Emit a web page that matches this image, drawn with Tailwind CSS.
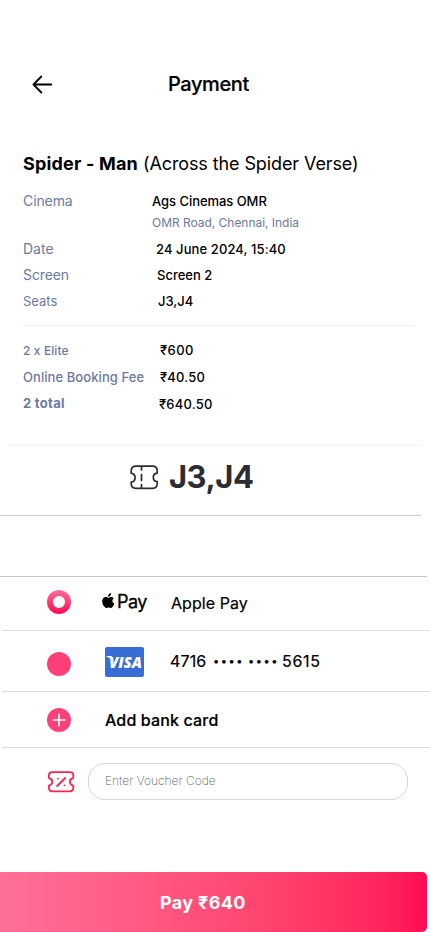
<!DOCTYPE html>
<html lang="en">
<head>
<meta charset="utf-8">
<meta name="viewport" content="width=device-width, initial-scale=1">
<title>Payment</title>
<script src="https://cdn.jsdelivr.net/npm/@tailwindcss/browser@4"></script>
</head>
<body class="bg-white">
<main class="w-[430px] h-[932px] overflow-hidden bg-white text-black font-['Inter',sans-serif] flex flex-col whitespace-nowrap">
  <header class="h-[40px] mt-[64px] flex items-center shrink-0">
    <button class="ml-[32px] w-[21px]" aria-label="Back">
      <svg class="block" width="21" height="20" viewBox="0 0 21 20" fill="none" stroke="#000" stroke-width="1.8" stroke-linecap="round" stroke-linejoin="round"><path d="M19.3 10.5H1.5M9.3 2.5L1.5 10.5L9.3 18.5"/></svg>
    </button>
    <h1 class="ml-[115px] text-[20px] font-medium tracking-[-0.4px] [-webkit-text-stroke:0.2px_black]">Payment</h1>
  </header>

  <section class="shrink-0 mt-[47px] text-[#6b7aa1]">
    <h2 class="h-[24px] pl-[23px] flex items-center text-[18px] text-black whitespace-pre"><span class="font-bold tracking-[0.18px]">Spider - Man</span><span class="tracking-[-0.1px]"> (Across the Spider Verse)</span></h2>
    <div class="h-[26px] mt-[13px] pl-[23px] flex items-center"><span class="w-[129px] pb-[2px] text-[14px] tracking-[-0.1px]">Cinema</span><span class="text-[13px] pt-px font-medium text-black tracking-[-0.05px]">Ags Cinemas OMR</span></div>
    <div class="h-[18px] pl-[152px] flex items-center text-[12px] tracking-[-0.03px]">OMR Road, Chennai, India</div>
    <div class="h-[26px] mt-[4px] pl-[23px] flex items-center"><span class="w-[133px] pb-[2px] text-[14px]">Date</span><span class="text-[13px] pt-px font-medium text-black tracking-[0.1px]">24 June 2024, 15:40</span></div>
    <div class="h-[26px] pl-[23px] flex items-center"><span class="w-[134px] pb-[2px] text-[14px] tracking-[-0.1px]">Screen</span><span class="text-[13px] pt-px font-medium text-black">Screen 2</span></div>
    <div class="h-[26px] pl-[23px] flex items-center"><span class="w-[135px] pt-px text-[13px]">Seats</span><span class="text-[13px] pt-px font-medium text-black">J3,J4</span></div>
    <div class="h-px mt-[11px] ml-[23px] w-[391px] bg-[#f2f2fc]"></div>
    <div class="h-[26px] mt-[12px] pl-[23px] flex items-center"><span class="w-[137px] text-[12px] font-medium tracking-[0.1px]">2 x Elite</span><span class="text-[13px] font-medium text-black tracking-[0.4px]">₹600</span></div>
    <div class="h-[27px] pl-[23px] flex items-center"><span class="w-[137px] text-[13px] font-medium tracking-[0.07px]">Online Booking Fee</span><span class="text-[13px] font-medium text-black tracking-[0.2px]">₹40.50</span></div>
    <div class="h-[26px] pl-[23px] flex items-center"><span class="w-[136px] text-[13px] font-bold tracking-[0.3px]">2 total</span><span class="text-[13px] pt-[2px] font-medium text-black tracking-[0.2px]">₹640.50</span></div>
    <div class="h-px mt-[28px] ml-[8px] w-[414px] bg-[#f5f5f5]"></div>
  </section>

  <section class="shrink-0 h-[70px] w-[421px] border-b border-[#cbcbcb] flex items-start pt-[12px] pl-[130px]">
    <svg class="mt-[7px]" width="29" height="25" viewBox="0 0 29 25" fill="none" stroke="#2b2d33" stroke-width="1.7" stroke-linecap="round" stroke-linejoin="round"><path d="M6 1.2H22.5Q27.2 1.2 27.2 6V8.2C22 9 22 15.8 27.2 16.6V18.5Q27.2 23.3 22.5 23.3H6Q1.2 23.3 1.2 18.5V17.2C6.4 16 6.4 9.3 1.2 8.2V6Q1.2 1.2 6 1.2Z"/><path d="M11.5 1.5V5M11.5 9.5V15.5M11.5 19.5V23"/></svg>
    <div class="ml-[10px] text-[31px] leading-[38px] font-bold text-[#2b2d33] tracking-[-0.5px]">J3,J4</div>
  </section>

  <section class="shrink-0 mt-[60px]">
    <div class="h-px w-[427px] bg-[#c9c9c9]"></div>
    <div class="h-[54px] ml-[2px] border-b border-[#dcdcdc] flex items-center">
      <svg class="ml-[45px] mb-[3px]" width="24" height="24" viewBox="0 0 24 24"><defs><linearGradient id="ring" x1="0" y1="0" x2="0" y2="1"><stop stop-color="#ff6e98"/><stop offset="1" stop-color="#ff0953"/></linearGradient></defs><circle cx="12" cy="12" r="12" fill="url(#ring)"/><circle cx="12" cy="12" r="6" fill="#fff"/></svg>
      <div class="ml-[31px] mb-[4px] w-[69px] flex items-center">
        <svg class="mb-[2px]" width="13" height="16" viewBox="0 0 13 16"><path d="M9.1 0C9.2 1.1 8.8 2 8.2 2.7C7.6 3.4 6.9 3.8 6.1 3.7C6 2.7 6.4 1.8 7 1.2C7.6.5 8.4.1 9.1 0ZM11.8 5.5C10.9 6.1 10.4 6.9 10.4 7.9C10.4 9.1 11.1 10.1 12.4 10.6C12 11.8 11.3 12.9 10.5 13.9C10 14.5 9.5 14.9 8.7 14.9C7.9 14.9 7.5 14.4 6.5 14.4C5.5 14.4 5.1 14.9 4.3 14.9C3.5 14.9 2.9 14.3 2.3 13.6C.9 11.9.3 10.2.2 8.4C.2 5.9 1.7 4.1 3.8 4.1C4.9 4.1 5.7 4.8 6.4 4.8C7.1 4.8 8 4 9.3 4C10.3 4 11.3 4.6 11.8 5.5Z"/></svg>
        <span class="ml-[2px] text-[18px] tracking-[-0.6px] [-webkit-text-stroke:0.3px_black]">Pay</span>
      </div>
      <span class="text-[16px] pb-[2px] [-webkit-text-stroke:0.2px_black] tracking-[0.05px]">Apple Pay</span>
    </div>
    <div class="h-[61px] ml-[2px] border-b border-[#dcdcdc] flex items-center">
      <span class="ml-[45px] mt-[5px] size-[24px] rounded-full bg-[#ff4078]"></span>
      <svg class="ml-[34px] mt-px" width="39" height="30" viewBox="0 0 39 30" role="img"><rect width="39" height="30" rx="2" fill="#396dd6"/><text x="4" y="20.5" textLength="33" lengthAdjust="spacingAndGlyphs" font-family="Open Sans, sans-serif" font-weight="800" font-style="italic" font-size="16" fill="#fff">VISA</text><path d="M1.5 9H6.5L9 15.5C7 12.5 4.5 10.5 1.5 9.7Z" fill="#fff"/></svg>
      <span class="ml-[26px] text-[16px] flex items-center [-webkit-text-stroke:0.2px_black]"><span class="w-[43px] tracking-[0.15px]">4716</span><span class="w-[35px] text-[11px] tracking-[1.6px]">••••</span><span class="w-[34px] text-[11px] tracking-[1.6px]">••••</span><span class="tracking-[0.7px]">5615</span></span>
    </div>
    <div class="h-[56px] ml-[2px] border-b border-[#dcdcdc] flex items-center">
      <svg class="ml-[45px]" width="24" height="24" viewBox="0 0 24 24"><circle cx="12" cy="12" r="12" fill="#ff4078"/><path d="M12 6.3V17.7M6.3 12H17.7" stroke="#fff" stroke-width="1.7" stroke-linecap="round"/></svg>
      <span class="ml-[34px] text-[16px] font-medium tracking-[0.15px] [-webkit-text-stroke:0.2px_black]">Add bank card</span>
    </div>
    <div class="mt-[15px] flex items-center">
      <svg class="ml-[48px]" width="27" height="22" viewBox="0 0 27 22" fill="none" stroke="#f8234f" stroke-width="1.8" stroke-linecap="round" stroke-linejoin="round"><path d="M4.5 1.2H21.5Q25.3 1.2 25.3 4.5V7C20.8 8 20.8 13.6 25.3 14.6V17Q25.3 20.3 21.5 20.3H4.5Q.9 20.3 .9 17V14.6C5.4 13.6 5.4 8 .9 7V4.5Q.9 1.2 4.5 1.2ZM9.2 15L17.2 7M9.7 7.7H9.8M16.5 14.3H16.6"/></svg>
      <input class="ml-[13px] w-[320px] h-[37px] rounded-[17px] border border-[#d6d6d6] px-[16px] pb-[2px] text-[12px] font-extralight placeholder:text-[#606060]" placeholder="Enter Voucher Code" aria-label="Voucher code">
    </div>
  </section>

  <button class="shrink-0 mt-[72px] h-[60px] w-[427px] pl-[160px] text-left rounded-r-[5px] bg-linear-to-r from-[#ff6f99] to-[#ff0a54] text-white text-[18px] font-bold tracking-[0.35px]">Pay ₹640</button>
</main>
</body>
</html>
